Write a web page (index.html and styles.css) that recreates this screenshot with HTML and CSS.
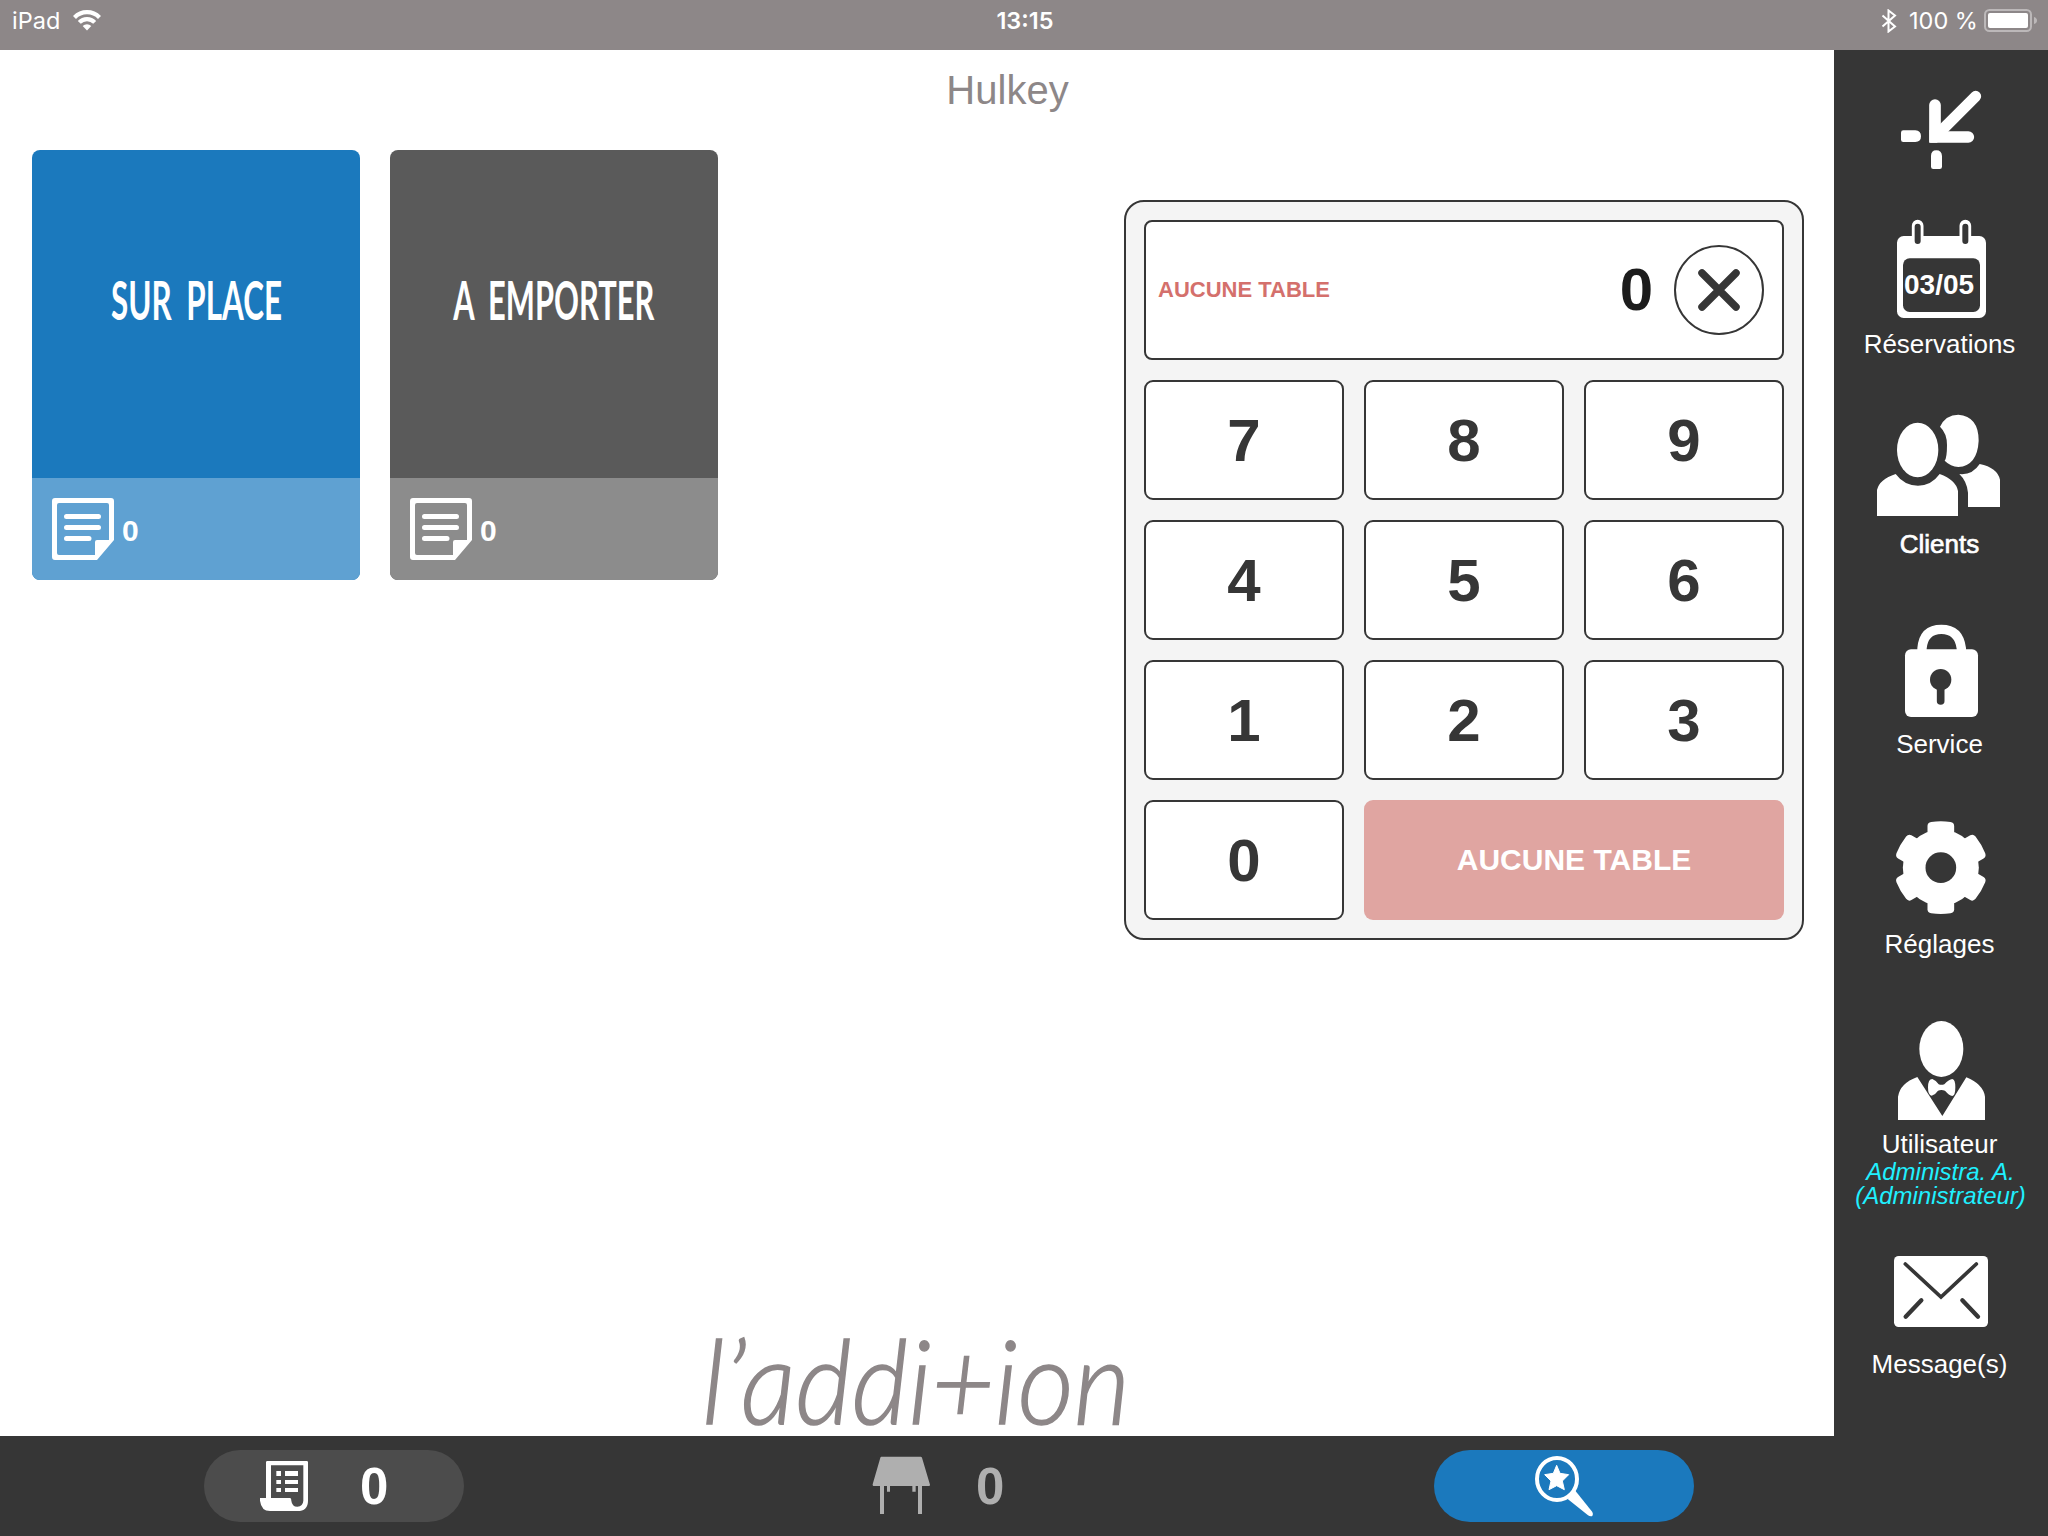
FILE: index.html
```html
<!DOCTYPE html>
<html lang="fr">
<head>
<meta charset="utf-8">
<title>l'addition</title>
<link rel="stylesheet" href="styles.css">
</head>
<body>
<header class="status">
  <div class="status-left">
    <span class="device">iPad</span>
    <svg class="wifi" viewBox="0 0 28 21"><g fill="none" stroke="#fff" stroke-width="4.2"><path d="M1.500 7.400a17.600 17.600 0 0 1 25 0"/><path d="M6.300 12.400a10.800 10.800 0 0 1 15.400 0"/></g><path d="M14 20.500l-4.300-4.400a6.200 6.200 0 0 1 8.600 0z" fill="#fff"/></svg>
  </div>
  <div class="clock">13:15</div>
  <div class="status-right">
    <svg class="bluetooth" viewBox="0 0 16 24"><path d="M1.500 6.500l12.500 11-6.500 5V1.500l6.500 5-12.500 11" fill="none" stroke="#fff" stroke-width="2"/></svg>
    <span class="charge">100 %</span>
    <svg class="battery" viewBox="0 0 54 24"><rect x="1" y="1" width="46" height="21" rx="4.500" fill="none" stroke="#bcb8b9" stroke-width="2"/><rect x="4" y="4" width="40" height="15" rx="2" fill="#fff"/><path d="M50 8q3 1 3 3.500t-3 3.500z" fill="#bcb8b9"/></svg>
  </div>
</header>
<div class="app">
  <div class="left">
    <main class="workspace">
      <h1 class="title">Hulkey</h1>
      <div class="board">
        <section class="tiles">
          <article class="tile tile-blue">
            <h2 class="tile-name"><span class="name-place">SUR PLACE</span></h2>
            <div class="tile-foot">
              <svg class="note" viewBox="0 0 62 62"><path fill-rule="evenodd" d="M3 0H59Q62 0 62 3V42L45 62H3Q0 62 0 59V3Q0 0 3 0ZM7 5Q5 5 5 7V55Q5 57 7 57H43V44Q43 42 45 42H57V7Q57 5 55 5Z"/><path class="note-lines" d="M14.500 18.500H46.500M14.500 29.500H46.500M14.500 40.500H37"/></svg>
              <span class="count">0</span>
            </div>
          </article>
          <article class="tile tile-gray">
            <h2 class="tile-name"><span class="name-takeaway">A EMPORTER</span></h2>
            <div class="tile-foot">
              <svg class="note" viewBox="0 0 62 62"><path fill-rule="evenodd" d="M3 0H59Q62 0 62 3V42L45 62H3Q0 62 0 59V3Q0 0 3 0ZM7 5Q5 5 5 7V55Q5 57 7 57H43V44Q43 42 45 42H57V7Q57 5 55 5Z"/><path class="note-lines" d="M14.500 18.500H46.500M14.500 29.500H46.500M14.500 40.500H37"/></svg>
              <span class="count">0</span>
            </div>
          </article>
        </section>
        <section class="keypad">
          <div class="display">
            <span class="display-label">AUCUNE TABLE</span>
            <span class="display-value">0</span>
            <button class="clear" aria-label="Effacer"><svg viewBox="0 0 42 42"><path d="M4 4L38 38M38 4L4 38" fill="none" stroke="#363636" stroke-width="7.500" stroke-linecap="round"/></svg></button>
          </div>
          <button class="key">7</button><button class="key">8</button><button class="key">9</button>
          <button class="key">4</button><button class="key">5</button><button class="key">6</button>
          <button class="key">1</button><button class="key">2</button><button class="key">3</button>
          <button class="key">0</button><button class="key-table">AUCUNE TABLE</button>
        </section>
      </div>
      <svg class="brand" viewBox="0 0 440 130"><text x="6" y="118" textLength="428" lengthAdjust="spacingAndGlyphs">l’addi+ion</text></svg>
    </main>
    <footer class="bottom">
      <div class="pill pill-dark">
        <svg class="pill-icon" viewBox="72 60 468 216"><path fill="#fff" fill-rule="evenodd" d="M262 93H380Q384 93 384 97V212Q384 243 352 243H270Q244 243 240 212V204H258V97Q258 93 262 93ZM273 106V204H331Q334 206 334 212Q336 230 352 230Q369 228 370 212V106Z"/><path fill="#fff" d="M289 123h14v15h-14zM315 123h39v15h-39zM289 150h14v12h-14zM315 150h39v12h-39zM289 174h14v12h-14zM315 174h39v12h-39z"/></svg>
        <span>0</span>
      </div>
      <div class="pill pill-plain">
        <svg class="pill-icon" viewBox="417 420 468 216"><path fill="#afafaf" d="M604 440H722Q725 440 726 443L750 524Q750 528 747 528H726V612H714V528H707V545H697V528H630V545H621V528H612V612H600V528H580Q577 527 578 523L601 443Q602 440 604 440Z"/></svg>
        <span>0</span>
      </div>
      <div class="pill pill-blue">
        <svg class="search" viewBox="102 60 780 216"><ellipse cx="471" cy="147" rx="60" ry="63" fill="none" stroke="#fff" stroke-width="12"/><path fill="#fff" d="M503 207L526 182L577 246Q581 253 577 258Q570 260 563 255Z"/><path fill="#fff" stroke="#fff" stroke-width="3" stroke-linejoin="round" d="M470 106L480 130L506 134L487 153L493 179L470 167L447 179L453 153L434 134L460 130Z"/></svg>
      </div>
    </footer>
  </div>
  <nav class="sidebar">
    <svg class="collapse" viewBox="0 150 642 360"><g fill="none" stroke="#fff" stroke-linecap="round"><path stroke-width="35" d="M303 315V411H403"/><path stroke-width="33" d="M306 408L425 289"/></g><path fill="#fff" d="M286 390H310V428H290Q286 428 286 424ZM208 391H244Q261 392 261 409T244 426H208Q201 426 201 419V398Q201 391 208 391ZM291 468Q291 451 307 451T324 468V500Q324 507 317 507H298Q291 507 291 500Z"/></svg>
    <div class="item">
      <div class="calendar">
        <svg class="icon" viewBox="0 510 642 477"><rect x="189" y="708" width="267" height="246" rx="20" fill="#fff"/><rect x="207" y="775" width="231" height="161" rx="20" fill="#363636"/><g fill="none" stroke-linecap="round"><path stroke="#fff" stroke-width="35" d="M251 677V715M394 677V715"/><path stroke="#363636" stroke-width="18" d="M251 680V723M394 680V723"/></g></svg>
        <span class="date">03/05</span>
      </div>
      <span class="label">Réservations</span>
    </div>
    <div class="item">
      <svg class="icon" viewBox="0 -60 642 477"><g fill="#fff"><ellipse cx="251" cy="180" rx="62" ry="82"/><path d="M129 378V300Q136 268 185 252Q211 287 252 287Q292 287 317 252Q366 270 372 303V378ZM318 110Q335 74 373 74Q434 79 434 152Q430 227 373 231Q350 230 332 212Q339 204 339 165Q339 130 318 110ZM402 351V308Q399 274 376 252Q415 256 437 222Q490 233 498 269V351Z"/></g></svg>
      <span class="label label-strong">Clients</span>
    </div>
    <div class="item">
      <svg class="icon" viewBox="0 540 642 477"><path fill="none" stroke="#fff" stroke-width="28" d="M264 785V775Q269 718 322 718T382 775V785"/><rect x="213" y="778" width="219" height="203" rx="18" fill="#fff"/><circle cx="320" cy="869" r="32" fill="#363636"/><path stroke="#363636" stroke-width="23" stroke-linecap="round" d="M320 880V933"/></svg>
      <span class="label">Service</span>
    </div>
    <div class="item">
      <svg class="icon" viewBox="0 -30 642 477"><g transform="translate(320.500 263)" fill="#fff"><circle r="114"/><path id="tooth" d="M-40 0V-125Q-40 -135 -29 -137Q0 -141 29 -137Q40 -135 40 -125V0Z"/><use href="#tooth" transform="rotate(60)"/><use href="#tooth" transform="rotate(120)"/><use href="#tooth" transform="rotate(180)"/><use href="#tooth" transform="rotate(240)"/><use href="#tooth" transform="rotate(300)"/><circle r="46" fill="#363636"/></g></svg>
      <span class="label">Réglages</span>
    </div>
    <div class="item item-user">
      <svg class="icon" viewBox="0 -90 642 477"><g fill="#fff"><ellipse cx="322" cy="147" rx="66" ry="84"/><path d="M192 360V290Q198 250 250 231L325 348L397 232Q447 252 453 290V360ZM282 262Q282 237 295 237Q306 241 314 253Q322 256 331 253Q345 238 355 237Q364 238 364 262Q364 287 355 288Q345 286 333 272Q322 268 312 272Q305 283 293 287Q282 287 282 262Z"/></g></svg>
      <span class="label">Utilisateur</span>
      <span class="user">Administra. A.<br>(Administrateur)</span>
    </div>
    <div class="item">
      <svg class="icon icon-mail" viewBox="0 627 642 420"><rect x="180" y="768" width="282" height="213" rx="14" fill="#fff"/><g fill="none" stroke="#363636" stroke-linecap="round"><path stroke-width="11" d="M214 792L321 891L427 792"/><path stroke-width="13" d="M215 950L262 901M432 950L385 901"/></g></svg>
      <span class="label">Message(s)</span>
    </div>
  </nav>
</div>
</body>
</html>
```
FILE: styles.css
```css
* { box-sizing: border-box; }
body {
  margin: 0;
  width: 2048px;
  height: 1536px;
  overflow: hidden;
  background: #fff;
  font-family: "Liberation Sans", Arial, sans-serif;
}
svg { display: block; flex: none; }
button { font: inherit; padding: 0; margin: 0; }

.status {
  height: 50px;
  background: #8d8788;
  color: #fff;
  display: grid;
  grid-template-columns: 1fr auto 1fr;
  padding: 0 10px 9px 12px;
  align-items: center;
  font: 23.5px/40px Inter, "Noto Sans", sans-serif;
}
.status-left { display: flex; align-items: center; gap: 13px; }
.device { width: 48px; }
.wifi { width: 28px; height: 21px; }
.clock { font-weight: 600; }
.status-right { display: flex; justify-content: flex-end; align-items: center; }
.bluetooth { width: 16px; height: 24px; margin-right: 12px; }
.charge { width: 70px; white-space: nowrap; }
.battery { width: 54px; height: 24px; margin-left: 5px; }

.app { display: grid; grid-template-columns: 1834px 214px; height: 1486px; }
.left { display: grid; grid-template-rows: 1386px 100px; }

.workspace { display: flex; flex-direction: column; }
.title {
  margin: 0;
  padding: 17px 0 0 181px;
  height: 100px;
  font-size: 40px;
  line-height: 46px;
  font-weight: 400;
  color: #8d8788;
  text-align: center;
}
.board {
  display: flex;
  justify-content: space-between;
  align-items: flex-start;
  padding: 0 30px 0 32px;
}
.tiles { display: flex; gap: 30px; }
.tile { width: 328px; height: 430px; border-radius: 8px; overflow: hidden; color: #fff; }
.tile-blue { background: #1b79bd; }
.tile-gray { background: #5a5a5a; }
.tile-name {
  margin: 0;
  height: 328px;
  padding-bottom: 28px;
  display: flex;
  align-items: center;
  justify-content: center;
  font: 700 53px/64px Lato, sans-serif;
  white-space: nowrap;
  word-spacing: 12px;
}
.name-place { transform: scaleX(0.592); }
.name-takeaway { transform: scaleX(0.582); }
.tile-foot {
  height: 102px;
  padding-left: 20px;
  display: flex;
  align-items: center;
  gap: 8px;
}
.tile-blue .tile-foot { background: #5fa1d2; }
.tile-gray .tile-foot { background: #8c8c8c; }
.note { width: 62px; height: 62px; fill: #fff; }
.note-lines { fill: none; stroke: #fff; stroke-width: 5; stroke-linecap: round; }
.count { font-size: 30px; font-weight: 700; line-height: 34px; padding-top: 3px; }

.keypad {
  margin-top: 50px;
  width: 680px;
  height: 740px;
  padding: 18px;
  border: 2px solid #363636;
  border-radius: 20px;
  background: #f4f4f4;
  display: grid;
  grid-template-columns: repeat(3, 200px);
  grid-template-rows: 140px repeat(4, 120px);
  gap: 20px;
}
.display {
  grid-column: 1 / -1;
  display: flex;
  align-items: center;
  padding: 0 18px 0 12px;
  background: #fff;
  border: 2px solid #363636;
  border-radius: 8px;
}
.display-label { font-size: 22px; font-weight: 700; color: #d4706c; flex: 1; }
.display-value { font-size: 60px; font-weight: 700; color: #1c1c1c; margin-right: 21px; line-height: 68px; }
.clear {
  width: 90px;
  height: 90px;
  border: 2px solid #363636;
  border-radius: 50%;
  background: #fff;
  display: grid;
  place-items: center;
}
.clear svg { width: 42px; height: 42px; }
.key {
  background: #fff;
  border: 2px solid #363636;
  border-radius: 9px;
  color: #363636;
  font-size: 60px;
  font-weight: 700;
}
.key-table {
  grid-column: span 2;
  border: 0;
  border-radius: 9px;
  background: #e0a5a1;
  color: #fff;
  font-size: 30px;
  font-weight: 700;
}
.brand { width: 440px; height: 130px; margin: auto 0 0 696px; overflow: visible; }
.brand text { font: italic 300 116px Lato, sans-serif; fill: #8d8788; stroke: #8d8788; stroke-width: 1.5px; }

.bottom {
  background: #363636;
  display: flex;
  align-items: flex-start;
  gap: 355px;
  padding: 14px 0 0 204px;
}
.pill {
  width: 260px;
  height: 72px;
  border-radius: 36px;
  display: flex;
  align-items: center;
  font-size: 51px;
  font-weight: 700;
  line-height: 56px;
}
.pill span { padding-top: 1px; }
.pill-dark { background: #4c4c4c; color: #fff; }
.pill-plain { color: #afafaf; }
.pill-plain span { padding-left: 1px; }
.pill-blue { background: #1b79bd; }
.pill-icon { width: 156px; height: 72px; }
.search { width: 260px; height: 72px; }

.sidebar {
  background: #363636;
  color: #fff;
  display: flex;
  flex-direction: column;
}
.collapse { width: 214px; height: 120px; }
.item { height: 200px; display: flex; flex-direction: column; align-items: center; flex: none; }
.item-user { height: 239px; }
.icon { width: 214px; height: 159px; }
.icon-mail { height: 140px; }
.label { font-size: 26px; line-height: 30px; padding-right: 3px; }
.label-strong { -webkit-text-stroke: 0.7px #fff; }
.user {
  margin-top: 1px;
  padding-right: 1px;
  font-size: 24px;
  line-height: 24px;
  font-style: italic;
  color: #1ff0ff;
  text-align: center;
}
.calendar { position: relative; }
.date {
  position: absolute;
  left: 70px;
  top: 99px;
  font-size: 28px;
  line-height: 32px;
  font-weight: 700;
}
```
